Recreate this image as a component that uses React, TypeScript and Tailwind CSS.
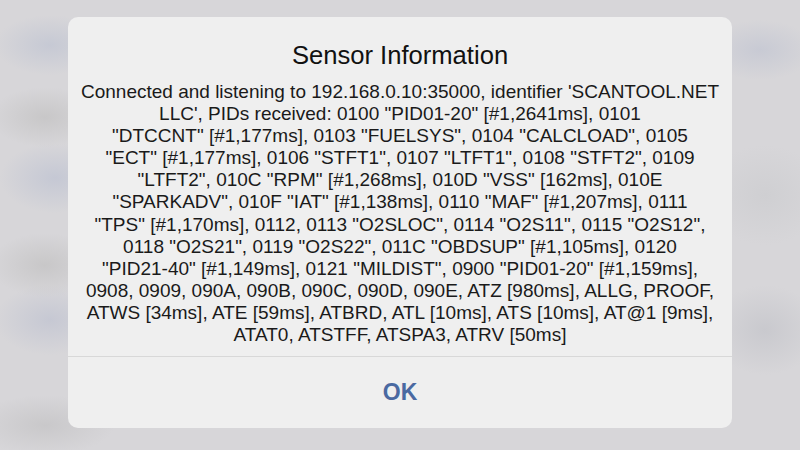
import React from "react";

const lines = [
  "Connected and listening to 192.168.0.10:35000, identifier 'SCANTOOL.NET",
  "LLC', PIDs received: 0100 \"PID01-20\" [#1,2641ms], 0101",
  "\"DTCCNT\" [#1,177ms], 0103 \"FUELSYS\", 0104 \"CALCLOAD\", 0105",
  "\"ECT\" [#1,177ms], 0106 \"STFT1\", 0107 \"LTFT1\", 0108 \"STFT2\", 0109",
  "\"LTFT2\", 010C \"RPM\" [#1,268ms], 010D \"VSS\" [162ms], 010E",
  "\"SPARKADV\", 010F \"IAT\" [#1,138ms], 0110 \"MAF\" [#1,207ms], 0111",
  "\"TPS\" [#1,170ms], 0112, 0113 \"O2SLOC\", 0114 \"O2S11\", 0115 \"O2S12\",",
  "0118 \"O2S21\", 0119 \"O2S22\", 011C \"OBDSUP\" [#1,105ms], 0120",
  "\"PID21-40\" [#1,149ms], 0121 \"MILDIST\", 0900 \"PID01-20\" [#1,159ms],",
  "0908, 0909, 090A, 090B, 090C, 090D, 090E, ATZ [980ms], ALLG, PROOF,",
  "ATWS [34ms], ATE [59ms], ATBRD, ATL [10ms], ATS [10ms], AT@1 [9ms],",
  "ATAT0, ATSTFF, ATSPA3, ATRV [50ms]",
];

export default function App() {
  return (
    <div
      className="w-[800px] h-[450px] overflow-hidden flex items-start justify-center pt-[17px] bg-[#d7d6d9] bg-[radial-gradient(ellipse_55px_30px_at_50px_45px,#c6c9d4,transparent),radial-gradient(ellipse_55px_30px_at_45px_117px,#c8c7c8,transparent),radial-gradient(ellipse_55px_35px_at_55px_178px,#c5c8d4,transparent),radial-gradient(ellipse_55px_32px_at_45px_265px,#c8c7c8,transparent),radial-gradient(ellipse_55px_35px_at_50px_320px,#c6c8d3,transparent),radial-gradient(ellipse_70px_30px_at_45px_425px,#c9c8ca,transparent),radial-gradient(ellipse_55px_30px_at_760px_50px,#c8cad4,transparent),radial-gradient(ellipse_60px_50px_at_765px_195px,#cfcfd2,transparent),radial-gradient(ellipse_55px_45px_at_765px_330px,#c9c9ce,transparent)]"
      style={{ fontFamily: '"Liberation Sans", Arial, sans-serif' }}
    >
      <div className="w-[664px] h-[411px] rounded-[10px] bg-[#efefef] flex flex-col">
        <div className="pt-[23px] text-center text-[25.6px] leading-[30px] text-[#111]">
          Sensor Information
        </div>
        <div className="mt-[11px] text-center text-[19px] leading-[22.1px] text-[#1a1a1a] whitespace-nowrap">
          {lines.map((l, i) => (
            <div key={i}>{l}</div>
          ))}
        </div>
        <div className="mt-[10px] h-px bg-[#d8d8d8]" />
        <div className="flex-1 flex items-center justify-center">
          <span className="text-[23px] font-bold text-[#4a69a1]">OK</span>
        </div>
      </div>
    </div>
  );
}
